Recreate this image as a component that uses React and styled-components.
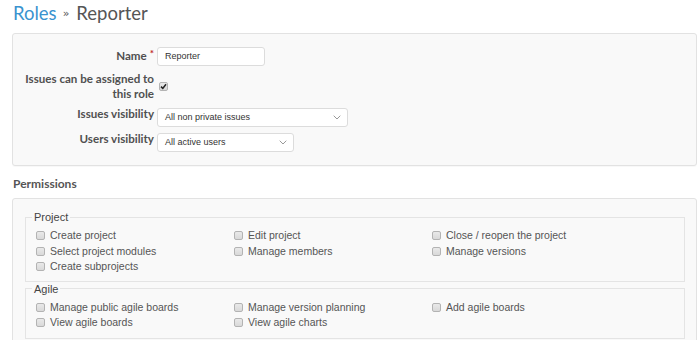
import React from "react";
import styled, { createGlobalStyle } from "styled-components";

const Global = createGlobalStyle`
  html, body { margin: 0; padding: 0; background: #fff; }
  body { font-family: "Liberation Sans", Arial, sans-serif; color: #555; }
`;

const Page = styled.div`
  padding: 1px 3px 0 12px;
`;

const Title = styled.h2`
  margin: 0;
  padding-left: 1px;
  height: 24px;
  font-family: Lato, "Liberation Sans", sans-serif;
  font-weight: 400;
  font-size: 18.5px;
  line-height: 24px;
  color: #555;
  display: flex;
  align-items: center;
  overflow: hidden;
`;

const Crumb = styled.span`
  color: #3a93cf;
`;

const Sep = styled.span`
  font-family: "DejaVu Sans", sans-serif;
  font-size: 11px;
  line-height: 12px;
  margin: 2px 7px 0 6px;
  color: #555;
`;

const Box = styled.div`
  background: #f9f9f9;
  border: 1px solid #e2e2e2;
  border-radius: 3px;
  box-shadow: 0 1px 1px rgba(0, 0, 0, 0.03);
  margin-top: ${(p) => p.$mt || 0}px;
  padding: ${(p) => p.$pad};
`;

const FormGrid = styled.div`
  display: grid;
  grid-template-columns: 141px auto;
  column-gap: 2px;
  row-gap: 6px;
  align-items: start;
`;

const Label = styled.div`
  margin-top: -1px;
  padding-bottom: 1px;
  font-family: Lato, "Liberation Sans", sans-serif;
  font-weight: 700;
  font-size: 11.6px;
  line-height: ${(p) => (p.$tall ? "15px" : "14px")};
  color: #505050;
  text-align: right;
`;

const Req = styled.span`
  color: #c0262a;
  margin-left: 3px;
  font-size: 10px;
  vertical-align: 3px;
`;

const TextInput = styled.div`
  box-sizing: border-box;
  width: 108px;
  height: 19px;
  margin-left: 1px;
  background: #fff;
  border: 1px solid #dcdcdc;
  border-radius: 3px;
  padding: 0 7px;
  font-size: 9px;
  line-height: 17px;
  color: #333;
`;

const Select = styled.div`
  box-sizing: border-box;
  width: ${(p) => p.$w}px;
  height: 19px;
  margin-left: 1px;
  background: #fff;
  border: 1px solid #dcdcdc;
  border-radius: 3px;
  padding: 0 6px 0 7px;
  font-size: 9px;
  line-height: 17px;
  color: #333;
  display: flex;
  align-items: center;
  justify-content: space-between;
`;

const CheckCell = styled.div`
  padding: 4px 0 0 3px;
`;

const Box9 = styled.span`
  box-sizing: border-box;
  display: inline-flex;
  align-items: center;
  justify-content: center;
  flex: none;
  width: 9px;
  height: 9px;
  border: 1px solid #b3b3b3;
  border-radius: 2px;
  background: linear-gradient(#e9e9e9, #d9d9d9);
`;

const Section = styled.h3`
  margin: 10px 0 6px 1px;
  font-family: Lato, "Liberation Sans", sans-serif;
  font-weight: 700;
  font-size: 12px;
  line-height: 16px;
  color: #555;
`;

const Fieldset = styled.fieldset`
  margin: ${(p) => p.$mt || 0}px 0 0 0;
  border: 1px solid #e4e4e4;
  padding: 4px 10px ${(p) => p.$pb}px 10px;
  min-width: 0;
`;

const Legend = styled.legend`
  margin-left: -4px;
  padding: 0 2px;
  font-size: 11px;
  line-height: 14px;
  color: #444;
`;

const PermGrid = styled.div`
  display: grid;
  grid-template-columns: repeat(3, 198px);
`;

const Perm = styled.label`
  display: flex;
  align-items: center;
  gap: 5px;
  font-size: 10.5px;
  line-height: 15.5px;
  color: #555;
  white-space: nowrap;
`;

const Chevron = () => (
  <svg width="8" height="5" viewBox="0 0 8 5">
    <path d="M0.7 0.7 L4 4 L7.3 0.7" fill="none" stroke="#999" strokeWidth="1" />
  </svg>
);

const Tick = () => (
  <svg width="7" height="7" viewBox="0 0 7 7">
    <path d="M1 3.6 L2.8 5.4 L6 1.2" fill="none" stroke="#222" strokeWidth="1.5" />
  </svg>
);

const project = [
  ["Create project", "Edit project", "Close / reopen the project"],
  ["Select project modules", "Manage members", "Manage versions"],
  ["Create subprojects", null, null],
];

const agile = [
  ["Manage public agile boards", "Manage version planning", "Add agile boards"],
  ["View agile boards", "View agile charts", null],
];

const Group = ({ title, rows, mt, pb }) => (
  <Fieldset $mt={mt} $pb={pb}>
    <Legend>{title}</Legend>
    <PermGrid>
      {rows.flat().map((t, i) =>
        t ? (
          <Perm key={i}>
            <Box9 />
            {t}
          </Perm>
        ) : (
          <span key={i} />
        )
      )}
    </PermGrid>
  </Fieldset>
);

export default function App() {
  return (
    <>
      <Global />
      <Page>
        <Title>
          <Crumb>Roles</Crumb>
          <Sep>»</Sep>
          Reporter
        </Title>
        <Box $mt={8} $pad="13px 12px 13px 0">
          <FormGrid>
            <Label>
              Name<Req>*</Req>
            </Label>
            <div>
              <TextInput>Reporter</TextInput>
            </div>
            <Label $tall>
              Issues can be assigned to
              <br />
              this role
            </Label>
            <CheckCell>
              <Box9>
                <Tick />
              </Box9>
            </CheckCell>
            <Label>Issues visibility</Label>
            <div>
              <Select $w={191}>
                All non private issues
                <Chevron />
              </Select>
            </div>
            <Label>Users visibility</Label>
            <div>
              <Select $w={137}>
                All active users
                <Chevron />
              </Select>
            </div>
          </FormGrid>
        </Box>
        <Section>Permissions</Section>
        <Box $pad="11px 11px 7px 12px">
          <Group title="Project" rows={project} pb={6} />
          <Group title="Agile" rows={agile} pb={7} />
        </Box>
      </Page>
    </>
  );
}
